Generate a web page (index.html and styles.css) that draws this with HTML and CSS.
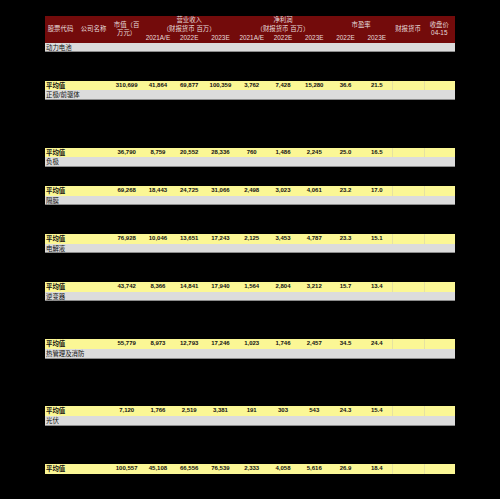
FILE: index.html
```html
<!DOCTYPE html>
<html lang="zh">
<head>
<meta charset="utf-8">
<link rel="stylesheet" href="styles.css">
</head>
<body>
<div class="sheet">
  <div class="head">
    <div class="h h-code">股票代码</div>
    <div class="h h-name">公司名称</div>
    <div class="h h-cap">市值（百万元）</div>
    <div class="h h-rev">营业收入</div>
    <div class="h h-rev-sub">（财报货币 百万）</div>
    <div class="h h-np">净利润</div>
    <div class="h h-np-sub">（财报货币 百万）</div>
    <div class="h h-pe">市盈率</div>
    <div class="h h-cur">财报货币</div>
    <div class="h h-close">收盘价<br>04-15</div>
    <div class="h y c4">2021A/E</div>
    <div class="h y c5">2022E</div>
    <div class="h y c6">2023E</div>
    <div class="h y c7">2021A/E</div>
    <div class="h y c8">2022E</div>
    <div class="h y c9">2023E</div>
    <div class="h y c10">2022E</div>
    <div class="h y c11">2023E</div>
  </div>

  <div class="row cat"><span class="label">动力电池</span></div>
  <div class="row blank"></div><div class="row blank"></div><div class="row blank"></div>
  <div class="row avg"><span class="label">平均值</span><span></span><span>310,699</span><span>41,864</span><span>69,877</span><span>100,359</span><span>3,762</span><span>7,428</span><span>15,280</span><span>36.6</span><span>21.5</span><span class="bl"></span><span class="bl"></span></div>

  <div class="row cat"><span class="label">正极/前驱体</span></div>
  <div class="row blank"></div><div class="row blank"></div><div class="row blank"></div><div class="row blank"></div><div class="row blank"></div>
  <div class="row avg"><span class="label">平均值</span><span></span><span>36,790</span><span>8,759</span><span>20,552</span><span>28,336</span><span>760</span><span>1,486</span><span>2,245</span><span>25.0</span><span>16.5</span><span class="bl"></span><span class="bl"></span></div>

  <div class="row cat"><span class="label">负极</span></div>
  <div class="row blank"></div><div class="row blank"></div>
  <div class="row avg"><span class="label">平均值</span><span></span><span>69,268</span><span>18,443</span><span>24,725</span><span>31,066</span><span>2,498</span><span>3,023</span><span>4,061</span><span>23.2</span><span>17.0</span><span class="bl"></span><span class="bl"></span></div>

  <div class="row cat"><span class="label">隔膜</span></div>
  <div class="row blank"></div><div class="row blank"></div><div class="row blank"></div>
  <div class="row avg"><span class="label">平均值</span><span></span><span>76,928</span><span>10,046</span><span>13,651</span><span>17,243</span><span>2,125</span><span>3,453</span><span>4,787</span><span>23.3</span><span>15.1</span><span class="bl"></span><span class="bl"></span></div>

  <div class="row cat"><span class="label">电解液</span></div>
  <div class="row blank"></div><div class="row blank"></div><div class="row blank"></div>
  <div class="row avg"><span class="label">平均值</span><span></span><span>43,742</span><span>8,366</span><span>14,841</span><span>17,940</span><span>1,564</span><span>2,804</span><span>3,212</span><span>15.7</span><span>13.4</span><span class="bl"></span><span class="bl"></span></div>

  <div class="row cat"><span class="label">逆变器</span></div>
  <div class="row blank"></div><div class="row blank"></div><div class="row blank"></div><div class="row blank"></div>
  <div class="row avg"><span class="label">平均值</span><span></span><span>55,779</span><span>8,973</span><span>12,793</span><span>17,246</span><span>1,023</span><span>1,746</span><span>2,457</span><span>34.5</span><span>24.4</span><span class="bl"></span><span class="bl"></span></div>

  <div class="row cat"><span class="label">热管理及消防</span></div>
  <div class="row blank"></div><div class="row blank"></div><div class="row blank"></div><div class="row blank"></div><div class="row blank"></div>
  <div class="row avg"><span class="label">平均值</span><span></span><span>7,120</span><span>1,766</span><span>2,519</span><span>3,381</span><span>191</span><span>303</span><span>543</span><span>24.3</span><span>15.4</span><span class="bl"></span><span class="bl"></span></div>

  <div class="row cat"><span class="label">光伏</span></div>
  <div class="row blank"></div><div class="row blank"></div><div class="row blank"></div><div class="row blank"></div>
  <div class="row avg"><span class="label">平均值</span><span></span><span>100,557</span><span>45,108</span><span>66,556</span><span>76,539</span><span>2,333</span><span>4,058</span><span>5,616</span><span>26.9</span><span>18.4</span><span class="bl"></span><span class="bl"></span></div>
</div>
</body>
</html>
```

FILE: styles.css
```css
html, body {
  margin: 0;
  padding: 0;
  background: #000;
  height: 100%;
}

body {
  font-family: "Liberation Sans", "Noto Sans CJK SC", sans-serif;
  overflow: hidden;
}

.sheet {
  margin: 16px 0 0 45px;
  width: 410px;
}

.head {
  display: grid;
  grid-template-columns: 31px 35px repeat(11, 31.27px);
  grid-template-rows: repeat(3, 8.67px);
  height: 26.5px;
  background: #730b0b;
  color: #e6dcdc;
  font-size: 6.4px;
  line-height: 8px;
}

.h {
  display: flex;
  align-items: center;
  justify-content: center;
  text-align: center;
  white-space: nowrap;
}

.h-code { grid-column: 1; grid-row: 1 / 4; }
.h-name { grid-column: 2; grid-row: 1 / 4; }
.h-cap { grid-column: 3; grid-row: 1 / 4; white-space: normal; padding: 0 2px; }
.h-rev { grid-column: 4 / 7; grid-row: 1; }
.h-rev-sub { grid-column: 4 / 7; grid-row: 2; }
.h-np { grid-column: 7 / 10; grid-row: 1; }
.h-np-sub { grid-column: 7 / 10; grid-row: 2; }
.h-pe { grid-column: 10 / 12; grid-row: 1 / 3; }
.h-cur { grid-column: 12; grid-row: 1 / 4; }
.h-close { grid-column: 13; grid-row: 1 / 4; }
.y { grid-row: 3; }
.c4 { grid-column: 4; }
.c5 { grid-column: 5; }
.c6 { grid-column: 6; }
.c7 { grid-column: 7; }
.c8 { grid-column: 8; }
.c9 { grid-column: 9; }
.c10 { grid-column: 10; }
.c11 { grid-column: 11; }

.row {
  display: grid;
  grid-template-columns: 31px 35px repeat(11, 31.27px);
  height: 9.58px;
  box-sizing: border-box;
  font-size: 6.4px;
  line-height: 9.5px;
  color: #111;
}

.row > span {
  text-align: center;
  white-space: nowrap;
}

.row > .label {
  text-align: left;
  padding-left: 1px;
}

.cat {
  background: #dcdcdc;
  border-bottom: 1px solid #8c8c8c;
}

.cat .label {
  grid-column: 1 / 4;
}

.avg {
  background: #fbf795;
  font-weight: bold;
  font-size: 6px;
}

.avg .label {
  font-size: 6.4px;
}

.avg .bl {
  border-left: 1px solid #e6e2a0;
}

.blank {
  background: #000;
}
```
